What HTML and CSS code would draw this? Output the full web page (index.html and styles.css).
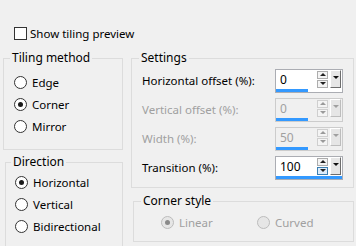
FILE: index.html
```html
<!DOCTYPE html>
<html lang="en">
<head>
  <meta charset="UTF-8">
  <title>Tiling</title>
  <link rel="stylesheet" href="styles.css">
</head>
<body>

<label class="preview"><span class="check"></span>Show tiling preview</label>

<div class="panels">
  <div class="col-left">
    <fieldset class="group tiling">
      <legend>Tiling method</legend>
      <div class="group-body">
        <div class="option"><span class="radio"></span>Edge</div>
        <div class="option"><span class="radio on"></span>Corner</div>
        <div class="option"><span class="radio"></span>Mirror</div>
      </div>
    </fieldset>
    <fieldset class="group direction">
      <legend>Direction</legend>
      <div class="group-body">
        <div class="option"><span class="radio on"></span>Horizontal</div>
        <div class="option"><span class="radio"></span>Vertical</div>
        <div class="option"><span class="radio"></span>Bidirectional</div>
      </div>
    </fieldset>
  </div>

  <div class="col-right">
    <fieldset class="group settings">
      <legend>Settings</legend>
      <div class="group-body">
        <div class="row">
          <span class="row-label">Horizontal offset (%):</span>
          <div class="spin">
            <div class="spin-main">
              <span class="spin-value">0</span>
              <span class="spin-btns"><i class="up"></i><i class="down"></i></span>
              <span class="spin-drop"></span>
            </div>
            <div class="spin-bar" style="width:49%"></div>
          </div>
        </div>
        <div class="row disabled">
          <span class="row-label">Vertical offset (%):</span>
          <div class="spin">
            <div class="spin-main">
              <span class="spin-value">0</span>
              <span class="spin-btns"><i class="up"></i><i class="down"></i></span>
              <span class="spin-drop"></span>
            </div>
            <div class="spin-bar" style="width:49%"></div>
          </div>
        </div>
        <div class="row disabled">
          <span class="row-label">Width (%):</span>
          <div class="spin">
            <div class="spin-main">
              <span class="spin-value">50</span>
              <span class="spin-btns"><i class="up"></i><i class="down"></i></span>
              <span class="spin-drop"></span>
            </div>
            <div class="spin-bar" style="width:49%"></div>
          </div>
        </div>
        <div class="row">
          <span class="row-label">Transition (%):</span>
          <div class="spin">
            <div class="spin-main">
              <span class="spin-value">100</span>
              <span class="spin-btns"><i class="up"></i><i class="down hot"></i></span>
              <span class="spin-drop"></span>
            </div>
            <div class="spin-bar" style="width:100%"></div>
          </div>
        </div>
      </div>
    </fieldset>

    <fieldset class="group corner">
      <legend>Corner style</legend>
      <div class="group-body corner-row disabled">
        <div class="option"><span class="radio on"></span>Linear</div>
        <div class="option"><span class="radio"></span>Curved</div>
      </div>
    </fieldset>
  </div>
</div>

</body>
</html>
```

FILE: styles.css
```css
body { margin: 0; background: #f0f0f0; font-family: "Noto Sans", sans-serif; font-size: 11.5px; color: #000; width: 356px; height: 246px; overflow: hidden; }

.preview { display: flex; align-items: center; gap: 3px; margin: 26px 0 0 14px; height: 14px; }
.check { width: 11px; height: 11px; border: 1px solid #333; background: #fff; }

.panels { display: flex; gap: 8px; margin-top: 10px; padding-left: 3px; }
.col-left { display: flex; flex-direction: column; gap: 4px; }
.col-right { display: flex; flex-direction: column; gap: 5px; }

.group { margin: 0; padding: 0; border: 1px solid #dcdcdc; box-sizing: border-box; min-width: 0; }
.group legend { padding: 0 2px; margin-left: 6px; line-height: 16px; font-size: 12px; }

.tiling { width: 120px; height: 100px; }
.tiling .group-body { padding: 5px 0 0 10px; }
.direction { width: 118px; height: 96px; margin-left: 2px; }
.direction legend { margin-left: 5px; }
.direction .group-body { padding: 1px 0 0 9px; }
.settings { width: 223px; height: 138px; }
.settings legend { margin-left: 7px; }
.settings .group-body { padding: 0 10px; }
.corner { width: 221px; height: 49px; margin-left: 2px; }
.corner legend { margin-left: 7px; }
.corner .group-body { padding: 2px 0 0 27px; }

.option { display: flex; align-items: center; gap: 5px; height: 22px; }
.radio { width: 11px; height: 11px; border: 1px solid #333; border-radius: 50%; background: #fff; position: relative; }
.radio.on::after { content: ""; position: absolute; left: 3px; top: 3px; width: 5px; height: 5px; border-radius: 50%; background: #1a1a1a; }

.row { display: flex; align-items: center; justify-content: space-between; height: 29px; }

.spin { width: 68px; height: 24px; box-sizing: border-box; border: 1px solid #abadb3; background: #fff; display: flex; flex-direction: column; font-size: 12px; }
.spin-main { flex: 1; display: flex; align-items: center; }
.spin-value { flex: 1; padding-left: 4px; }
.spin-btns { display: flex; flex-direction: column; gap: 1px; width: 11px; margin-right: 2px; }
.spin-btns i { height: 6px; border: 1px solid #adadad; background: #f4f4f4; position: relative; }
.spin-btns i::after { content: ""; position: absolute; left: 2px; border-left: 3px solid transparent; border-right: 3px solid transparent; }
.spin-btns .up::after { top: 1px; border-bottom: 3px solid #222; }
.spin-btns .down::after { top: 1px; border-top: 3px solid #222; }
.spin-btns .hot { border-color: #3c7fb1; background: #dcecfc; }
.spin-drop { width: 9px; height: 16px; margin-right: 1px; background: #e6e6e6; border-right: 1px solid #6d6d6d; border-bottom: 1px solid #6d6d6d; border-top: 1px solid #fff; border-left: 1px solid #fff; position: relative; }
.spin-drop::after { content: ""; position: absolute; left: 2px; top: 5px; border-left: 3px solid transparent; border-right: 3px solid transparent; border-top: 3px solid #111; }
.spin-bar { height: 3px; background: #3399ff; }

.disabled { color: #a0a0a0; }
.disabled .spin { background: #f0f0f0; border-color: #cccccc; }
.disabled .spin-btns i { border-color: #cfcfcf; }
.disabled .spin-btns .up::after { border-bottom-color: #9a9a9a; }
.disabled .spin-btns .down::after { border-top-color: #9a9a9a; }
.disabled .spin-drop { border-right-color: #bdbdbd; border-bottom-color: #bdbdbd; }
.disabled .spin-drop::after { border-top-color: #a0a0a0; }

.corner-row { display: flex; }
.corner-row .option { width: 98px; }
.disabled .radio { border-color: #bcbcbc; background: #e6e6e6; }
.disabled .radio.on::after { background: #8a8a8a; }
```
